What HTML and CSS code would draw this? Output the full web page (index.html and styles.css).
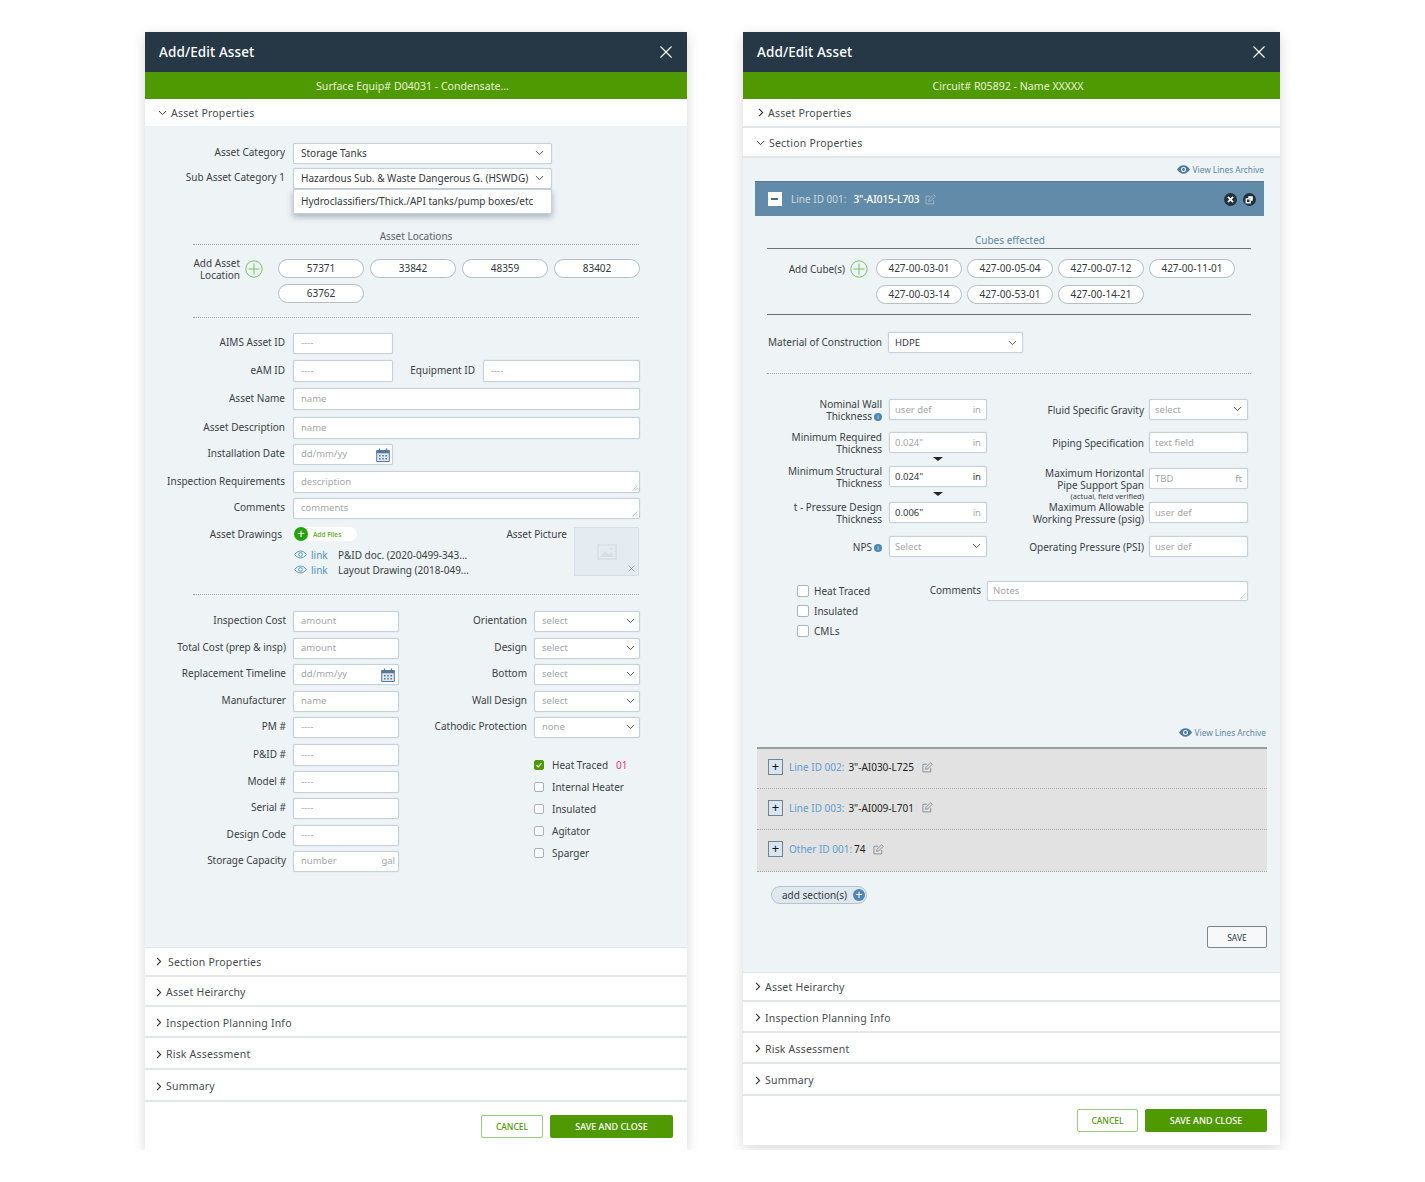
FILE: index.html
```html
<!DOCTYPE html>
<html lang="en">
<head>
    <meta charset="utf-8">
    <title>Add/Edit Asset</title>
    <link rel="stylesheet" href="styles.css">
</head>
<body>

<svg class="sprite" xmlns="http://www.w3.org/2000/svg">
    <symbol id="i-down" viewBox="0 0 10 6"><path d="M1 .8 5 4.8 9 .8" fill="none" stroke="currentColor" stroke-width="1.1"/></symbol>
    <symbol id="i-right" viewBox="0 0 6 10"><path d="M.8 1 4.8 5 .8 9" fill="none" stroke="currentColor" stroke-width="1.2"/></symbol>
    <symbol id="i-close" viewBox="0 0 14 14"><path d="M1.5 1.5 12.5 12.5M12.5 1.5 1.5 12.5" fill="none" stroke="currentColor" stroke-width="1.1"/></symbol>
    <symbol id="i-plus" viewBox="0 0 18 18"><circle cx="9" cy="9" r="8.2" fill="none" stroke="currentColor"/><path d="M9 3.5v11M3.5 9h11" stroke="currentColor"/></symbol>
    <symbol id="i-cal" viewBox="0 0 14 14"><path d="M.7 2.5h12.6v11H.7z" fill="#dfe8ef" stroke="currentColor"/><path d="M.7 2.5h12.6v2.8H.7z" fill="currentColor"/><path d="M3.5.5v3M10.5.5v3" stroke="currentColor" stroke-width="1.4"/><path d="M3 7h1.6v1.4H3zM6.2 7h1.6v1.4H6.2zM9.4 7H11v1.4H9.4zM3 10h1.6v1.4H3zM6.2 10h1.6v1.4H6.2zM9.4 10H11v1.4H9.4z" fill="currentColor"/></symbol>
    <symbol id="i-eye" viewBox="0 0 14 9"><path d="M.7 4.5C2.5 2 4.6.8 7 .8s4.500 1.200 6.300 3.700C11.500 7 9.400 8.200 7 8.200S2.500 7 .7 4.500Z" fill="none" stroke="currentColor"/><circle cx="7" cy="4.500" r="2" fill="none" stroke="currentColor"/></symbol>
    <symbol id="i-eye-solid" viewBox="0 0 14 9"><path d="M0 4.500C1.900 1.600 4.300 0 7 0s5.100 1.600 7 4.500C12.100 7.400 9.700 9 7 9S1.900 7.400 0 4.500Z" fill="currentColor"/><circle cx="7" cy="4.500" r="2.700" fill="#eef3f6"/><circle cx="7" cy="4.500" r="1.500" fill="currentColor"/></symbol>
    <symbol id="i-edit" viewBox="0 0 12 12"><path d="M9.500 6.500v4.300H1V2.400h4.600" fill="none" stroke="currentColor" stroke-width=".9"/><path d="M4.300 5.800 9.500.8 11.200 2.500 6.200 7.600 4 8Z" fill="none" stroke="currentColor" stroke-width=".9"/></symbol>
    <symbol id="i-pic" viewBox="0 0 20 16"><path d="M1 1h18v14H1z" fill="none" stroke="currentColor" stroke-width="1.600"/><path d="M3 13 8 7l3.500 3.500L14 8l3 5Z" fill="currentColor"/><circle cx="14" cy="4.500" r="1.400" fill="currentColor"/></symbol>
    <symbol id="i-grip" viewBox="0 0 6 6"><path d="M5.500 .5 .5 5.500M5.500 3 3 5.500" stroke="currentColor" stroke-width=".8"/></symbol>
</svg>

<div class="page">

    <!-- surface equipment form -->
    <section class="panel panel-left">
        <header class="top-bar">
            <h1>Add/Edit Asset</h1>
            <svg class="close-x"><use href="#i-close"/></svg>
        </header>
        <div class="sub-bar">Surface Equip# D04031 - Condensate...</div>
        <div class="acc acc-open acc-first"><svg class="chev-d"><use href="#i-down"/></svg>Asset Properties</div>

        <div class="form-body form-left">
            <div class="row row-a">
                <label class="lbl">Asset Category</label>
                <div class="inp inp-sel inp-cat dark">Storage Tanks<svg class="chev-d"><use href="#i-down"/></svg></div>
            </div>
            <div class="row row-b">
                <label class="lbl">Sub Asset Category 1</label>
                <div class="inp inp-sel inp-cat dark">Hazardous Sub. &amp; Waste Dangerous G. (HSWDG)<svg class="chev-d"><use href="#i-down"/></svg>
                    <div class="menu">Hydroclassifiers/Thick./API tanks/pump boxes/etc</div>
                </div>
            </div>

            <div class="loc-title">Asset Locations</div>
            <div class="pill-row">
                <div class="add-lbl">Add Asset<br>Location</div>
                <svg class="add-icon"><use href="#i-plus"/></svg>
                <div class="pills">
                    <span class="pill">57371</span>
                    <span class="pill">33842</span>
                    <span class="pill">48359</span>
                    <span class="pill">83402</span>
                    <span class="pill">63762</span>
                </div>
            </div>
            <div class="dots dots-1"></div>

            <div class="row row-aims">
                <label class="lbl">AIMS Asset ID</label>
                <div class="inp inp-s">----</div>
            </div>
            <div class="row g6 h22">
                <label class="lbl">eAM ID</label>
                <div class="inp inp-s">----</div>
                <label class="lbl lbl-equip">Equipment ID</label>
                <div class="inp inp-equip">----</div>
            </div>
            <div class="row g6 h22">
                <label class="lbl">Asset Name</label>
                <div class="inp inp-l">name</div>
            </div>
            <div class="row g7 h22">
                <label class="lbl">Asset Description</label>
                <div class="inp inp-l">name</div>
            </div>
            <div class="row g5">
                <label class="lbl">Installation Date</label>
                <div class="inp inp-s">dd/mm/yy<svg class="cal"><use href="#i-cal"/></svg></div>
            </div>
            <div class="row g6 h22">
                <label class="lbl">Inspection Requirements</label>
                <div class="inp inp-l">description<svg class="grip"><use href="#i-grip"/></svg></div>
            </div>
            <div class="row g5">
                <label class="lbl">Comments</label>
                <div class="inp inp-l">comments<svg class="grip"><use href="#i-grip"/></svg></div>
            </div>

            <div class="draw-row">
                <div class="lbl lbl-draw">Asset Drawings</div>
                <div class="draw-list">
                    <div class="add-files"><span class="add-dot">+</span>Add Files</div>
                    <div class="doc doc-1"><svg class="eye"><use href="#i-eye"/></svg><a class="doc-link">link</a>P&amp;ID doc. (2020-0499-343...</div>
                    <div class="doc"><svg class="eye"><use href="#i-eye"/></svg><a class="doc-link">link</a>Layout Drawing (2018-049...</div>
                </div>
                <div class="lbl lbl-pic">Asset Picture</div>
                <div class="pic-box"><svg class="pic"><use href="#i-pic"/></svg><svg class="pic-x"><use href="#i-close"/></svg></div>
            </div>
            <div class="dots dots-2"></div>

            <div class="two-col">
                <div class="col-costs">
                    <div class="row"><label class="lbl">Inspection Cost</label><div class="inp inp-m">amount</div></div>
                    <div class="row g6"><label class="lbl">Total Cost (prep &amp; insp)</label><div class="inp inp-m">amount</div></div>
                    <div class="row g5"><label class="lbl">Replacement Timeline</label><div class="inp inp-m">dd/mm/yy<svg class="cal"><use href="#i-cal"/></svg></div></div>
                    <div class="row g6"><label class="lbl">Manufacturer</label><div class="inp inp-m">name</div></div>
                    <div class="row g5"><label class="lbl">PM #</label><div class="inp inp-m">----</div></div>
                    <div class="row g6 h22"><label class="lbl">P&amp;ID #</label><div class="inp inp-m">----</div></div>
                    <div class="row g5 h22"><label class="lbl">Model #</label><div class="inp inp-m">----</div></div>
                    <div class="row g5"><label class="lbl">Serial #</label><div class="inp inp-m">----</div></div>
                    <div class="row g6"><label class="lbl">Design Code</label><div class="inp inp-m">----</div></div>
                    <div class="row g5"><label class="lbl">Storage Capacity</label><div class="inp inp-m">number<span class="unit">gal</span></div></div>
                </div>
                <div class="col-selects">
                    <div class="row"><label class="lbl">Orientation</label><div class="inp inp-sel inp-m">select<svg class="chev-d"><use href="#i-down"/></svg></div></div>
                    <div class="row g6"><label class="lbl">Design</label><div class="inp inp-sel inp-m">select<svg class="chev-d"><use href="#i-down"/></svg></div></div>
                    <div class="row g5"><label class="lbl">Bottom</label><div class="inp inp-sel inp-m">select<svg class="chev-d"><use href="#i-down"/></svg></div></div>
                    <div class="row g6"><label class="lbl">Wall Design</label><div class="inp inp-sel inp-m">select<svg class="chev-d"><use href="#i-down"/></svg></div></div>
                    <div class="row g5"><label class="lbl">Cathodic Protection</label><div class="inp inp-sel inp-m">none<svg class="chev-d"><use href="#i-down"/></svg></div></div>
                    <div class="checks">
                        <div class="check"><span class="box box-on"><svg viewBox="0 0 10 10"><path d="M2 5.200 4.200 7.400 8 2.800" fill="none" stroke="#fff" stroke-width="1.400"/></svg></span>Heat Traced<em class="count">01</em></div>
                        <div class="check"><span class="box"></span>Internal Heater</div>
                        <div class="check"><span class="box"></span>Insulated</div>
                        <div class="check"><span class="box"></span>Agitator</div>
                        <div class="check"><span class="box"></span>Sparger</div>
                    </div>
                </div>
            </div>
        </div>

        <div class="acc acc-top"><svg class="chev-r"><use href="#i-right"/></svg><span class="acc-sec">Section Properties</span></div>
        <div class="acc"><svg class="chev-r"><use href="#i-right"/></svg>Asset Heirarchy</div>
        <div class="acc acc-31"><svg class="chev-r"><use href="#i-right"/></svg>Inspection Planning Info</div>
        <div class="acc acc-32"><svg class="chev-r"><use href="#i-right"/></svg>Risk Assessment</div>
        <div class="acc acc-32"><svg class="chev-r"><use href="#i-right"/></svg>Summary</div>
        <footer class="foot">
            <button class="btn-cancel">CANCEL</button>
            <button class="btn-save">SAVE AND CLOSE</button>
        </footer>
    </section>

    <!-- circuit form -->
    <section class="panel panel-right">
        <header class="top-bar">
            <h1>Add/Edit Asset</h1>
            <svg class="close-x"><use href="#i-close"/></svg>
        </header>
        <div class="sub-bar">Circuit# R05892 - Name XXXXX</div>
        <div class="acc acc-r1"><svg class="chev-r"><use href="#i-right"/></svg>Asset Properties</div>
        <div class="acc acc-r1 acc-r2"><svg class="chev-d"><use href="#i-down"/></svg>Section Properties</div>

        <div class="form-body form-right">
            <div class="archive archive-1"><svg class="eye-s"><use href="#i-eye-solid"/></svg>View Lines Archive</div>

            <div class="line-bar">
                <span class="minus"></span>
                <span class="line-id">Line ID 001:</span>
                <span class="line-val">3"-AI015-L703</span>
                <svg class="edit edit-light"><use href="#i-edit"/></svg>
                <span class="round"><svg viewBox="0 0 10 10"><path d="M3 3l4 4M7 3 3 7" stroke="#fff" stroke-width="1.300"/></svg></span>
                <span class="round round-2"><svg viewBox="0 0 10 10"><path d="M4 2.500h3.500V6H6V4H4Z" fill="#fff"/><path d="M2.500 4.500H5.500V7.500H2.500Z" fill="none" stroke="#fff"/></svg></span>
            </div>

            <div class="cube-title">Cubes effected</div>
            <div class="pill-row pill-row-r">
                <div class="add-lbl">Add Cube(s)</div>
                <svg class="add-icon"><use href="#i-plus"/></svg>
                <div class="pills pills-r">
                    <span class="pill">427-00-03-01</span>
                    <span class="pill">427-00-05-04</span>
                    <span class="pill">427-00-07-12</span>
                    <span class="pill">427-00-11-01</span>
                    <span class="pill">427-00-03-14</span>
                    <span class="pill">427-00-53-01</span>
                    <span class="pill">427-00-14-21</span>
                </div>
            </div>
            <div class="solid-line"></div>

            <div class="row row-mat">
                <label class="lbl">Material of Construction</label>
                <div class="inp inp-sel inp-mat dark">HDPE<svg class="chev-d"><use href="#i-down"/></svg></div>
            </div>
            <div class="dots dots-r"></div>

            <div class="spec">
                <div class="spec-left">
                    <div class="sp"><label class="lbl">Nominal Wall<br>Thickness<i class="info">i</i></label><div class="inp inp-sp inp-tight">user def<span class="unit">in</span></div></div>
                    <div class="sp g12"><label class="lbl">Minimum Required<br>Thickness</label><div class="inp inp-sp inp-tight">0.024"<span class="unit">in</span></div></div>
                    <div class="caret caret-1"></div>
                    <div class="sp"><label class="lbl">Minimum Structural<br>Thickness</label><div class="inp inp-sp inp-tight dark">0.024"<span class="unit dark">in</span></div></div>
                    <div class="caret caret-2"></div>
                    <div class="sp"><label class="lbl">t - Pressure Design<br>Thickness</label><div class="inp inp-sp inp-tight"><span class="dark">0.006"</span><span class="unit">in</span></div></div>
                    <div class="sp g13"><label class="lbl">NPS<i class="info">i</i></label><div class="inp inp-sel inp-sp inp-tight">Select<svg class="chev-d"><use href="#i-down"/></svg></div></div>
                </div>
                <div class="spec-right">
                    <div class="sp"><label class="lbl">Fluid Specific Gravity</label><div class="inp inp-sel inp-sp2 inp-tight">select<svg class="chev-d"><use href="#i-down"/></svg></div></div>
                    <div class="sp g12"><label class="lbl">Piping Specification</label><div class="inp inp-sp2 inp-tight">text field</div></div>
                    <div class="sp g15"><label class="lbl lbl-top">Maximum Horizontal<br>Pipe Support Span<small>(actual, field verified)</small></label><div class="inp inp-sp2 inp-tight">TBD<span class="unit">ft</span></div></div>
                    <div class="sp g13"><label class="lbl">Maximum Allowable<br>Working Pressure (psig)</label><div class="inp inp-sp2 inp-tight">user def</div></div>
                    <div class="sp g13"><label class="lbl">Operating Pressure (PSI)</label><div class="inp inp-sp2 inp-tight">user def</div></div>
                </div>
            </div>

            <div class="notes-row">
                <div class="checks-r">
                    <div class="check check-r"><span class="box box-r"></span>Heat Traced</div>
                    <div class="check check-r"><span class="box box-r"></span>Insulated</div>
                    <div class="check check-r"><span class="box box-r"></span>CMLs</div>
                </div>
                <label class="lbl lbl-notes">Comments</label>
                <div class="inp inp-notes inp-tight">Notes<svg class="grip"><use href="#i-grip"/></svg></div>
            </div>

            <div class="archive archive-2"><svg class="eye-s"><use href="#i-eye-solid"/></svg>View Lines Archive</div>

            <div class="lines">
                <div class="line-row line-row-1"><span class="plus-box">+</span><span class="other-id">Line ID 002:</span><span class="other-val">3"-AI030-L725</span><svg class="edit"><use href="#i-edit"/></svg></div>
                <div class="line-row"><span class="plus-box">+</span><span class="other-id">Line ID 003:</span><span class="other-val">3"-AI009-L701</span><svg class="edit"><use href="#i-edit"/></svg></div>
                <div class="line-row line-row-3"><span class="plus-box">+</span><span class="other-id">Other ID 001:</span><span class="other-val other-short">74</span><svg class="edit"><use href="#i-edit"/></svg></div>
            </div>

            <div class="add-section">add section(s)<span class="add-blue">+</span></div>
            <div class="save-row"><button class="btn-plain">SAVE</button></div>
        </div>

        <div class="acc acc-r acc-top"><svg class="chev-r"><use href="#i-right"/></svg>Asset Heirarchy</div>
        <div class="acc acc-r acc-31"><svg class="chev-r"><use href="#i-right"/></svg>Inspection Planning Info</div>
        <div class="acc acc-r acc-31"><svg class="chev-r"><use href="#i-right"/></svg>Risk Assessment</div>
        <div class="acc acc-r acc-32"><svg class="chev-r"><use href="#i-right"/></svg>Summary</div>
        <footer class="foot foot-r">
            <button class="btn-cancel">CANCEL</button>
            <button class="btn-save">SAVE AND CLOSE</button>
        </footer>
    </section>

</div>

</body>
</html>
```

FILE: styles.css
```css
* {
    box-sizing: border-box;
}

body {
    margin: 0;
    background: #fff;
    font-family: "Noto Sans", "Open Sans", sans-serif;
    font-size: 10px;
    color: #3a3f44;
}

.sprite {
    display: none;
}

.page {
    display: flex;
    align-items: flex-start;
    gap: 56px;
    padding: 32px 0 0 145px;
}

.panel {
    background: #fff;
    box-shadow: 0 3px 12px rgba(0, 0, 0, 0.16);
}

.panel-left {
    width: 542px;
}

.panel-right {
    width: 537px;
}

/* header */
.top-bar {
    display: flex;
    align-items: center;
    justify-content: space-between;
    height: 40px;
    padding: 0 14px;
    background: #263845;
    color: #fff;
}

.top-bar h1 {
    margin: 0;
    font-size: 13.500px;
    font-weight: 500;
    letter-spacing: 0.1px;
}

.close-x {
    width: 14px;
    height: 14px;
}

.sub-bar {
    height: 27px;
    padding-right: 7px;
    line-height: 28px;
    background: #4f9a02;
    color: #e8f3d8;
    font-size: 10.600px;
    text-align: center;
}

/* accordion */
.acc {
    display: flex;
    align-items: center;
    height: 30px;
    padding: 2px 0 0 11px;
    border-bottom: 2px solid #e4e7e9;
    background: #fff;
    color: #474c50;
    font-size: 10.500px;
    letter-spacing: 0.2px;
}

.acc-first {
    height: 27px;
    border-bottom: 0;
    padding: 1px 0 0 13px;
}

.acc-top {
    padding-top: 0;
    border-top: 1px solid #dfe3e6;
}

.acc-31 {
    height: 31px;
}

.acc-32 {
    height: 32px;
}

.acc-r {
    padding-left: 12px;
}

.acc-r1 {
    height: 29px;
    padding: 0 0 0 15px;
}

.acc-r1 .chev-r {
    margin-right: 7px;
}

.acc-r2 {
    height: 30px;
    padding: 2px 0 0 13px;
}

.acc-sec {
    margin-left: 2px;
}

.chev-d {
    flex: none;
    width: 9px;
    height: 6px;
}

.chev-r {
    flex: none;
    width: 6px;
    height: 9px;
    color: #333;
}

.acc .chev-d {
    margin-right: 4px;
    color: #333;
}

.acc .chev-r {
    margin-right: 4px;
}

/* form basics */
.form-body {
    background: #eef3f6;
}

.form-left {
    height: 821px;
    padding-top: 17px;
}

.form-right {
    height: 814px;
    padding-top: 5px;
}

.row {
    display: flex;
    align-items: center;
    height: 21px;
}

.g5 {
    margin-top: 5px;
}

.g6 {
    margin-top: 6px;
}

.g7 {
    margin-top: 7px;
}

.h22 {
    height: 22px;
}

.lbl {
    flex: none;
    width: 140px;
    margin-right: 8px;
    padding-bottom: 3px;
    color: #3a3f44;
    font-size: 10px;
    line-height: 12px;
    text-align: right;
}

.inp {
    position: relative;
    flex: none;
    display: flex;
    align-items: center;
    height: 100%;
    padding: 0 7px 2px;
    border: 1px solid #c4d2dc;
    border-radius: 2px;
    background: #fff;
    box-shadow: 0 0 1px rgba(90, 120, 140, 0.35);
    color: #a3a7aa;
    font-size: 9.500px;
    white-space: nowrap;
}

.inp-sel {
    justify-content: space-between;
}

.inp-sel .chev-d {
    color: #4a5157;
}

.dark {
    color: #33383c;
}

.inp-cat {
    width: 259px;
    font-size: 10px;
    padding-right: 7px;
}

.inp-s {
    width: 100px;
}

.inp-s .cal {
    right: 2px;
}

.inp-m {
    width: 106px;
}

.inp-m.inp-sel {
    padding-right: 4px;
}

.inp-m .unit {
    margin-right: -4px;
}

.inp-l {
    width: 347px;
}

.inp-equip {
    width: 157px;
}

.lbl-equip {
    width: 74px;
    margin: 0 8px 0 8px;
}

.row-b {
    margin-top: 4px;
}

.menu {
    position: absolute;
    top: 20px;
    left: -1px;
    z-index: 2;
    width: 259px;
    height: 25px;
    padding-left: 7px;
    border: 1px solid #c4d2dc;
    background: #fff;
    box-shadow: 0 3px 6px rgba(40, 60, 80, 0.35);
    line-height: 23px;
    font-size: 10px;
    color: #33383c;
}

.cal {
    position: absolute;
    right: 3px;
    top: 3px;
    width: 14px;
    height: 14px;
    color: #54799a;
}

.grip {
    position: absolute;
    right: 1px;
    bottom: 1px;
    width: 6px;
    height: 6px;
    color: #b9c2c9;
}

.unit {
    margin-left: auto;
    color: #a3a7aa;
}

.unit.dark {
    color: #33383c;
}

/* locations */
.loc-title {
    height: 17px;
    margin: 39px 48px 0;
    border-bottom: 1px dotted #9aa0a4;
    color: #5b6166;
    font-size: 10px;
    line-height: 16px;
    text-align: center;
}

.pill-row {
    display: flex;
    margin-top: 14px;
    padding-left: 48px;
}

.add-lbl {
    flex: none;
    width: 47px;
    margin-top: -2px;
    color: #3a3f44;
    font-size: 10px;
    line-height: 12px;
    text-align: right;
    white-space: nowrap;
}

.add-icon {
    flex: none;
    width: 18px;
    height: 18px;
    margin: 1px 15px 0 5px;
    color: #78c267;
}

.pills {
    display: flex;
    flex-wrap: wrap;
    gap: 6px;
    width: 362px;
}

.pill {
    width: 86px;
    height: 19px;
    border: 1px solid #b3bec6;
    border-radius: 10px;
    background: #fff;
    color: #33383c;
    font-size: 10px;
    line-height: 16px;
    text-align: center;
}

.dots {
    border-top: 1px dotted #9aa0a4;
}

.dots-1 {
    margin: 14px 48px 0;
}

.row-aims {
    margin-top: 15px;
}

/* drawings */
.draw-row {
    display: flex;
    height: 50px;
    margin-top: 8px;
}

.lbl-draw {
    width: 137px;
    margin-right: 12px;
    padding-top: 1px;
}

.draw-list {
    width: 207px;
}

.add-files {
    display: flex;
    align-items: center;
    width: 63px;
    height: 14px;
    border-radius: 7px;
    background: #fff;
    color: #6aaf2c;
    font-size: 6.500px;
    font-weight: 600;
}

.add-dot {
    width: 14px;
    height: 14px;
    margin-right: 5px;
    border-radius: 50%;
    background: #24a30e;
    color: #fff;
    font-size: 13px;
    font-weight: 400;
    line-height: 13px;
    text-align: center;
}

.doc {
    display: flex;
    align-items: center;
    height: 15px;
    color: #3a3f44;
    font-size: 10px;
}

.doc-1 {
    margin-top: 6px;
}

.eye {
    flex: none;
    width: 13px;
    height: 9px;
    color: #4d94bd;
}

.doc-link {
    width: 27px;
    margin-left: 4px;
    color: #4d94bd;
}

.lbl-pic {
    width: 66px;
    margin: 0 7px 0 0;
    padding-top: 1px;
}

.pic-box {
    position: relative;
    display: flex;
    align-items: center;
    justify-content: center;
    width: 65px;
    height: 49px;
    border: 1px solid #d5dfe6;
    background: #e5ecf1;
}

.pic {
    width: 20px;
    height: 16px;
    color: #d5dfe6;
}

.pic-x {
    position: absolute;
    right: 3px;
    bottom: 3px;
    width: 7px;
    height: 7px;
    color: #62707a;
}

.dots-2 {
    margin: 17px 48px 0;
}

.two-col {
    display: flex;
    margin-top: 16px;
}

.col-costs {
    width: 254px;
}

.col-costs .lbl {
    width: 141px;
    margin-right: 7px;
}

.col-selects .lbl {
    width: 128px;
    margin-right: 7px;
}

.checks {
    margin-top: 15px;
    padding-left: 135px;
}

.check {
    display: flex;
    align-items: center;
    height: 22px;
    color: #3a3f44;
    font-size: 10px;
}

.checks .check:first-child {
    height: 23px;
}

.box {
    flex: none;
    width: 10px;
    height: 10px;
    margin-right: 8px;
    border: 1px solid #a9b3ba;
    border-radius: 2px;
    background: #fff;
}

.box-on {
    display: flex;
    border-color: #4f9a02;
    background: #4f9a02;
}

.count {
    margin-left: 8px;
    color: #f0307a;
    font-style: normal;
}

/* footer buttons */
.foot {
    display: flex;
    justify-content: flex-end;
    gap: 7px;
    height: 48px;
    padding: 13px 14px 0 0;
}

.foot-r {
    height: 49px;
    padding-right: 13px;
}

.foot button {
    height: 23px;
    border-radius: 2px;
    font-family: inherit;
    font-weight: 500;
}

.btn-cancel {
    width: 62px;
    border: 1px solid #9fcb7d;
    background: #fff;
    color: #4f9a02;
    font-size: 8.500px;
}

.btn-save {
    width: 123px;
    border: 0;
    background: #4f9a02;
    color: #fff;
    font-size: 9px;
}

.foot-r .btn-cancel {
    width: 61px;
}

.foot-r .btn-save {
    width: 122px;
}

/* right panel */
.archive {
    display: flex;
    align-items: center;
    justify-content: flex-end;
    height: 14px;
    padding-bottom: 2px;
    color: #5d87a5;
    font-size: 8.300px;
}

.archive-1 {
    padding-right: 16px;
}

.archive-2 {
    margin-top: 89px;
    padding-right: 14px;
}

.eye-s {
    width: 13px;
    height: 9px;
    margin-right: 3px;
    color: #4a7b9d;
}

.line-bar {
    display: flex;
    align-items: center;
    height: 35px;
    margin: 4px 16px 0 12px;
    padding-left: 13px;
    border-top: 1px solid #56778f;
    background: #628ba9;
    font-size: 10px;
}

.minus {
    position: relative;
    width: 14px;
    height: 14px;
    margin-right: 9px;
    background: #fff;
}

.minus::after {
    content: "";
    position: absolute;
    left: 3px;
    top: 6px;
    width: 7px;
    height: 2px;
    background: #456a85;
}

.line-id {
    color: #c9d8e3;
    margin-right: 7px;
}

.line-val {
    color: #fff;
    font-weight: 500;
}

.edit {
    flex: none;
    width: 11px;
    height: 11px;
    margin-left: 5px;
    color: #7b8288;
}

.edit-light {
    color: #a9c0d1;
}

.round {
    flex: none;
    width: 13px;
    height: 13px;
    margin-left: auto;
    border-radius: 50%;
    background: #22313d;
}

.round svg {
    display: block;
    width: 13px;
    height: 13px;
}

.round-2 {
    margin: 0 8px 0 6px;
}

.cube-title {
    height: 17px;
    margin: 16px 29px 0 24px;
    padding-left: 2px;
    border-bottom: 1px solid #6c7175;
    color: #5d87a5;
    font-size: 10px;
    line-height: 16px;
    text-align: center;
}

.pill-row-r {
    margin-top: 10px;
    padding-left: 0;
}

.pill-row-r .add-lbl {
    width: 102px;
    margin-top: 0;
    padding-top: 4px;
}

.pill-row-r .add-icon {
    margin: 1px 8px 0 5px;
}

.pills-r {
    gap: 7px 5px;
    width: 362px;
}

.solid-line {
    margin: 10px 29px 0 24px;
    border-top: 1px solid #6c7175;
}

.row-mat {
    margin-top: 17px;
}

.row-mat .lbl {
    width: 139px;
    margin-right: 6px;
    padding-bottom: 1px;
}

.inp-mat {
    width: 135px;
    padding: 0 5px 0 6px;
}

.dots-r {
    margin: 20px 29px 0 24px;
}

.spec {
    display: flex;
    margin-top: 25px;
}

.spec-left {
    width: 244px;
}

.spec-right .lbl {
    width: 157px;
    margin-right: 5px;
}

.sp {
    display: flex;
    align-items: center;
    height: 21px;
}

.g12 {
    margin-top: 12px;
}

.g13 {
    margin-top: 13px;
}

.g15 {
    margin-top: 15px;
}

.spec-left .lbl {
    width: 139px;
    margin-right: 7px;
}

.sp .lbl {
    padding-bottom: 0;
}

.inp-tight {
    padding: 0 5px 1px;
}

.inp-sp {
    width: 98px;
}

.inp-sp2 {
    width: 99px;
}

.info {
    display: inline-block;
    width: 8px;
    height: 8px;
    margin-left: 2px;
    border-radius: 50%;
    background: #4a87b2;
    color: #fff;
    font-size: 6px;
    font-style: normal;
    line-height: 8px;
    text-align: center;
    vertical-align: middle;
}

.lbl-top {
    align-self: flex-start;
    margin-top: -1px;
}

.lbl small {
    display: block;
    font-size: 7.500px;
    line-height: 11px;
}

.caret {
    width: 0;
    height: 0;
    margin-left: 190px;
    border: 5px solid transparent;
    border-top: 4px solid #22262a;
    border-bottom: 0;
}

.caret-1 {
    margin-top: 4px;
    margin-bottom: 5px;
}

.caret-2 {
    margin-top: 5px;
    margin-bottom: 6px;
}

.notes-row {
    display: flex;
    height: 56px;
    margin-top: 24px;
    padding-right: 32px;
}

.checks-r {
    width: 157px;
    padding: 4px 0 0 54px;
}

.check-r {
    height: 20px;
    margin-top: -4px;
    margin-bottom: 4px;
}

.box-r {
    width: 12px;
    height: 12px;
    margin-right: 5px;
}

.lbl-notes {
    width: 81px;
    margin-right: 6px;
    padding-bottom: 0;
    line-height: 18px;
}

.inp-notes {
    width: 261px;
    height: 20px;
}

.lines {
    margin: 7px 13px 0 14px;
    border-top: 2px solid #9a9da0;
    background: #e2e2e2;
}

.line-row {
    display: flex;
    align-items: center;
    height: 41px;
    padding: 0 0 3px 11px;
    border-bottom: 1px dotted #a9acae;
    font-size: 10px;
}

.line-row-1 {
    height: 40px;
}

.line-row-3 {
    height: 42px;
}

.plus-box {
    width: 15px;
    height: 16px;
    margin-right: 6px;
    border: 1px solid #78808a;
    background: #d8e6f2;
    color: #111;
    font-size: 13px;
    line-height: 13px;
    text-align: center;
}

.other-id {
    margin-right: 4px;
    color: #5f9fce;
}

.other-val {
    margin-right: 3px;
    color: #1d1f21;
}

.other-short {
    margin-left: -2px;
    margin-right: 2px;
}

.add-section {
    display: flex;
    align-items: center;
    width: 96px;
    height: 18px;
    margin: 14px 0 0 28px;
    padding-left: 10px;
    border: 1px solid #b3c3d0;
    border-radius: 9px;
    background: #dfe8ef;
    color: #33383c;
    font-size: 10px;
}

.add-blue {
    width: 12px;
    height: 12px;
    margin-left: 6px;
    border-radius: 50%;
    background: #4f86b4;
    color: #fff;
    font-size: 12px;
    line-height: 11px;
    text-align: center;
}

.save-row {
    display: flex;
    justify-content: flex-end;
    margin-top: 22px;
    padding-right: 13px;
}

.btn-plain {
    width: 60px;
    height: 22px;
    border: 1px solid #7e858a;
    border-radius: 2px;
    background: #f6f8f9;
    color: #33383c;
    font-family: inherit;
    font-size: 8.500px;
}
```
